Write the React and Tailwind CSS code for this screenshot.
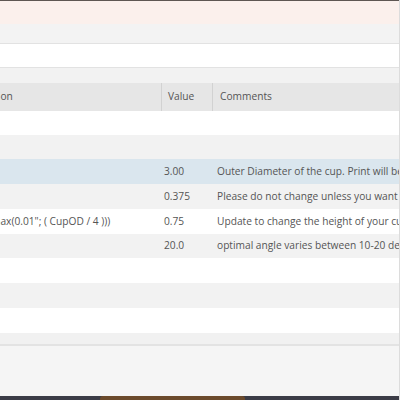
export default function App() {
  const rows = [
    { h: "h-[24px]", bg: "bg-white", a: "", v: "", c: "" },
    { h: "h-[24px]", bg: "bg-[#f2f2f2]", a: "", v: "", c: "" },
    { h: "h-[25px]", bg: "bg-[#dae6ee]", a: "", v: "3.00", c: "Outer Diameter of the cup. Print will be sized accordingly" },
    { h: "h-[25px]", bg: "bg-[#f2f2f2]", a: "", v: "0.375", c: "Please do not change unless you want larger walls" },
    { h: "h-[25px]", bg: "bg-white", a: "max(0.01\"; ( CupOD / 4 )))", v: "0.75", c: "Update to change the height of your cup" },
    { h: "h-[24px]", bg: "bg-[#f2f2f2]", a: "", v: "20.0", c: "optimal angle varies between 10-20 degrees" },
    { h: "h-[25px]", bg: "bg-white", a: "", v: "", c: "" },
    { h: "h-[25px]", bg: "bg-[#f2f2f2]", a: "", v: "", c: "" },
    { h: "h-[25px]", bg: "bg-white", a: "", v: "", c: "" },
  ];
  return (
    <div className="w-[400px] h-[400px] overflow-hidden flex flex-col bg-[#f4f4f4] text-[10.2px] text-[#555555] font-['Open_Sans',sans-serif] border-r border-[#dcdcdc]">
      <div className="h-[1px] bg-[#5e5652] shrink-0" />
      <div className="h-[23px] bg-[#fbf0ec] shrink-0" />
      <div className="h-[20px] bg-[#f3f3f3] shrink-0 border-b border-[#e2e2e2]" />
      <div className="h-[24px] bg-white shrink-0 border-b border-[#e2e2e2]" />
      <div className="h-[15px] bg-[#f2f2f2] shrink-0" />
      <div className="h-[28px] bg-[#e6e6e6] shrink-0 flex">
        <div className="w-[161px] overflow-hidden flex items-center whitespace-nowrap">
          <span className="-ml-[39px]">Expression</span>
        </div>
        <div className="w-[51px] border-l border-[#d2d2d2] flex items-center pl-[6px]">Value</div>
        <div className="flex-1 border-l border-[#d2d2d2] flex items-center pl-[7px] whitespace-nowrap">Comments</div>
      </div>
      {rows.map((r, i) => (
        <div key={i} className={`${r.h} ${r.bg} shrink-0 flex whitespace-nowrap`}>
          <div className="w-[161px] overflow-hidden flex items-center">
            <span className="-ml-[9px]">{r.a}</span>
          </div>
          <div className="w-[55px] flex items-center pl-[3px]">{r.v}</div>
          <div className="flex-1 flex items-center overflow-hidden pl-[1px]">{r.c}</div>
        </div>
      ))}
      <div className="h-[11px] bg-[#f1f1f1] shrink-0" />
      <div className="h-[2px] bg-[#e3e3e3] shrink-0" />
      <div className="flex-1 bg-[#f5f5f5]" />
      <div className="h-[4px] bg-[#3b3c46] shrink-0 flex">
        <div className="ml-[100px] w-[145px] h-full bg-[#6b4a2c] rounded-t-[3px]" />
      </div>
    </div>
  );
}
